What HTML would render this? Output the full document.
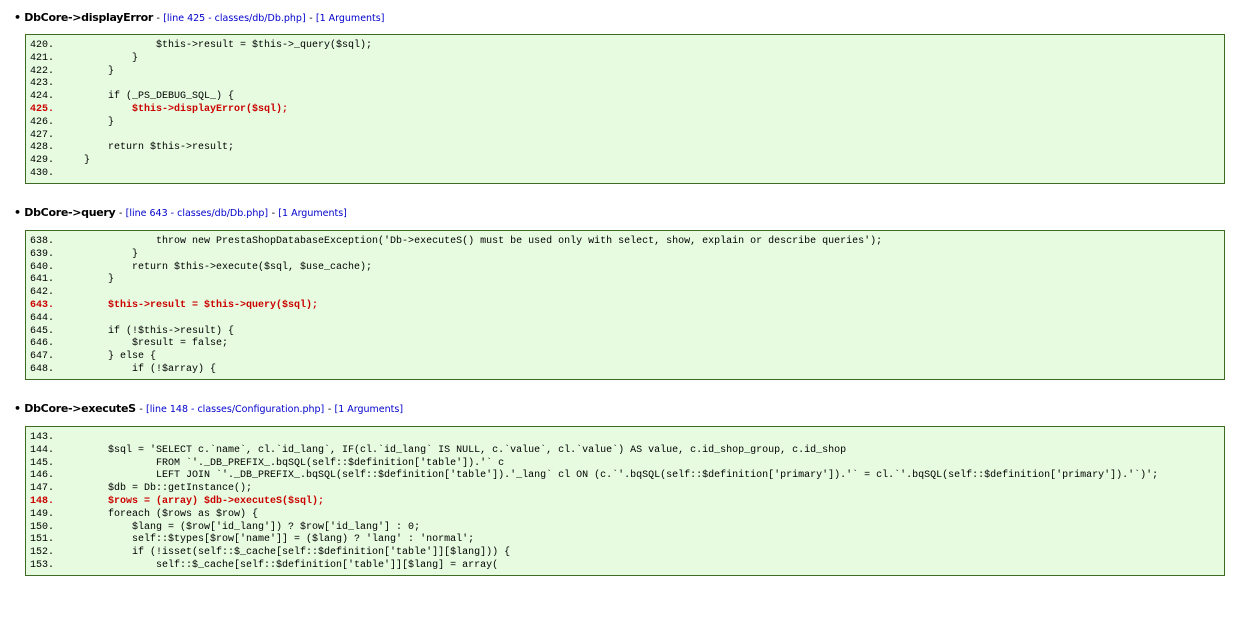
<!DOCTYPE html>
<html><head><meta charset="utf-8"><style>
body{margin:0;background:#fff;font-family:"DejaVu Sans","Liberation Sans",sans-serif;}
.h{position:absolute;left:14px;font-size:11px;font-weight:bold;color:#000;line-height:14px;letter-spacing:-0.3px}
.h .l{font-weight:normal;font-size:9.5px;color:#00c;letter-spacing:0}
.h .d{font-weight:normal;font-size:9.5px;color:#000}
.b{position:absolute;left:25px;width:1198px;background:#e6fbe0;border:1px solid #3d6b21;padding:5px 0 2px 0;}
.b pre{margin:0;font-family:"Liberation Mono",monospace;font-size:10px;line-height:12.8px;color:#000;padding-left:4px;white-space:pre}
.r{color:#c00;font-weight:bold}
</style></head><body>
<div class="h" style="top:11px">• DbCore-&gt;displayError <span class="d">-</span> <span class="l">[line 425 - classes/db/Db.php]</span> <span class="d">-</span> <span class="l">[1 Arguments]</span></div>
<div class="b" style="top:34px;height:141px"><pre>420.                 $this->result = $this->_query($sql);
421.             }
422.         }
423.
424.         if (_PS_DEBUG_SQL_) {
<span class="r">425.             $this->displayError($sql);</span>
426.         }
427.
428.         return $this->result;
429.     }
430.</pre></div>
<div class="h" style="top:206px">• DbCore-&gt;query <span class="d">-</span> <span class="l">[line 643 - classes/db/Db.php]</span> <span class="d">-</span> <span class="l">[1 Arguments]</span></div>
<div class="b" style="top:230px;height:141px"><pre>638.                 throw new PrestaShopDatabaseException('Db->executeS() must be used only with select, show, explain or describe queries');
639.             }
640.             return $this->execute($sql, $use_cache);
641.         }
642.
<span class="r">643.         $this->result = $this->query($sql);</span>
644.
645.         if (!$this->result) {
646.             $result = false;
647.         } else {
648.             if (!$array) {</pre></div>
<div class="h" style="top:402px">• DbCore-&gt;executeS <span class="d">-</span> <span class="l">[line 148 - classes/Configuration.php]</span> <span class="d">-</span> <span class="l">[1 Arguments]</span></div>
<div class="b" style="top:426px;height:141px"><pre>143.
144.         $sql = 'SELECT c.`name`, cl.`id_lang`, IF(cl.`id_lang` IS NULL, c.`value`, cl.`value`) AS value, c.id_shop_group, c.id_shop
145.                 FROM `'._DB_PREFIX_.bqSQL(self::$definition['table']).'` c
146.                 LEFT JOIN `'._DB_PREFIX_.bqSQL(self::$definition['table']).'_lang` cl ON (c.`'.bqSQL(self::$definition['primary']).'` = cl.`'.bqSQL(self::$definition['primary']).'`)';
147.         $db = Db::getInstance();
<span class="r">148.         $rows = (array) $db->executeS($sql);</span>
149.         foreach ($rows as $row) {
150.             $lang = ($row['id_lang']) ? $row['id_lang'] : 0;
151.             self::$types[$row['name']] = ($lang) ? 'lang' : 'normal';
152.             if (!isset(self::$_cache[self::$definition['table']][$lang])) {
153.                 self::$_cache[self::$definition['table']][$lang] = array(</pre></div>
</body></html>
